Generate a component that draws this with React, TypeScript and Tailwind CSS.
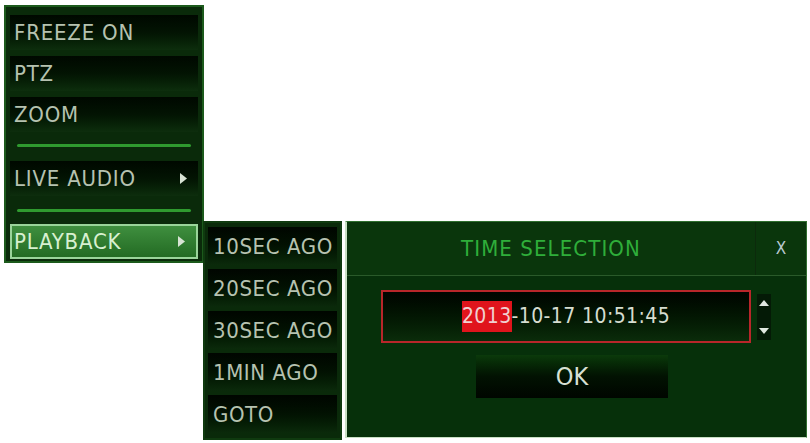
import React from 'react';

const font = { fontFamily: '"DejaVu Sans Condensed", "DejaVu Sans", sans-serif' };

const mainItems = [
  { label: 'FREEZE ON' },
  { label: 'PTZ' },
  { label: 'ZOOM' },
];

const subItems = ['10SEC AGO', '20SEC AGO', '30SEC AGO', '1MIN AGO', 'GOTO'];

function Arrow() {
  return (
    <svg width="9" height="13" viewBox="0 0 9 13" className="mr-[10px]">
      <path d="M1 1 L8 6.5 L1 12 Z" fill="#d8e4d4" />
    </svg>
  );
}

function Row({ children, arrow }: { children: React.ReactNode; arrow?: boolean }) {
  return (
    <div className="flex h-[35px] items-center justify-between bg-gradient-to-b from-[#000800] via-[#031403] to-[#0d2e0d] pl-[4px] text-[22px] tracking-[0.8px] text-[#b6c2b0]">
      <span>{children}</span>
      {arrow && <Arrow />}
    </div>
  );
}

function Separator() {
  return <div className="mx-[7px] h-[3px] rounded bg-[#2f9a2f]" />;
}

export default function App() {
  return (
    <div className="flex h-[443px] w-[810px] items-start overflow-hidden bg-white" style={font}>
      {/* main menu */}
      <div className="ml-[4px] mt-[5px] flex h-[258px] w-[200px] flex-col border-2 border-[#1c5a1c] bg-[#0a2a0a] px-[4px] pt-[8px]">
        <div className="flex flex-col gap-[6px]">
          {mainItems.map((it) => (
            <Row key={it.label}>{it.label}</Row>
          ))}
        </div>
        <div className="mt-[12px]">
          <Separator />
        </div>
        <div className="mt-[14px]">
          <Row arrow>LIVE AUDIO</Row>
        </div>
        <div className="mt-[13px]">
          <Separator />
        </div>
        <div className="mt-[12px] flex h-[35px] items-center justify-between border-2 border-[#9ad49a] bg-gradient-to-b from-[#3f8f3f] to-[#236b23] pl-[2px] text-[22px] tracking-[0.8px] text-[#d8f0d0]">
          <span>PLAYBACK</span>
          <Arrow />
        </div>
      </div>

      <div className="mt-[221px] flex items-start">
        {/* submenu */}
        <div className="-ml-[1px] flex h-[219px] w-[139px] flex-col gap-[4px] border-2 border-[#0f3a0f] bg-[#0a2a0a] px-[3px] py-[4px]">
          {subItems.map((s) => (
            <div
              key={s}
              className="flex h-[38px] items-center whitespace-nowrap bg-gradient-to-b from-[#000600] via-[#021202] to-[#0b2a0b] pl-[5px] text-[22px] tracking-[0.6px] text-[#b6c2b0]"
            >
              {s}
            </div>
          ))}
        </div>

        {/* time selection dialog */}
        <div className="ml-[3px] flex h-[217px] w-[462px] flex-col border border-l-2 border-[#2f6f2f] border-l-[#c8e0c4] border-b-[#c8e0c4] bg-[#06300a]">
          <div className="flex h-[54px] border-b border-[#2a5a2a] bg-[#0a360c]">
            <div className="flex flex-1 items-center justify-center text-[22px] tracking-[1.1px] text-[#2fae3a]">TIME SELECTION</div>
            <div className="flex w-[51px] items-center justify-center border-l border-[#0c2a0c] text-[17px] text-[#b8c8d0]">X</div>
          </div>
          <div className="mt-[14px] flex items-center">
            <div className="ml-[34px] flex h-[53px] w-[370px] items-center justify-center border-2 border-[#b8262a] bg-gradient-to-b from-[#000500] to-[#0b2c0b] text-[21px] tracking-[0.4px] text-[#d6ddd0]">
              <span className="bg-[#e0141c] text-[#f0d0d0]">2013</span>
              <span>-10-17 10:51:45</span>
            </div>
            <div className="ml-[6px] flex h-[46px] w-[14px] flex-col items-center justify-between bg-[#041a06] py-[6px]">
              <svg width="10" height="6" viewBox="0 0 10 6">
                <path d="M0 6 L5 0 L10 6 Z" fill="#e0e8e0" />
              </svg>
              <svg width="10" height="6" viewBox="0 0 10 6">
                <path d="M0 0 L5 6 L10 0 Z" fill="#e0e8e0" />
              </svg>
            </div>
          </div>
          <div className="mt-[12px] flex">
            <div className="ml-[129px] flex h-[43px] w-[192px] items-center justify-center bg-gradient-to-b from-[#0b3a0b] via-[#021202] to-[#000600] text-[25px] text-[#d8e0d4]">
              OK
            </div>
          </div>
        </div>
      </div>
    </div>
  );
}
